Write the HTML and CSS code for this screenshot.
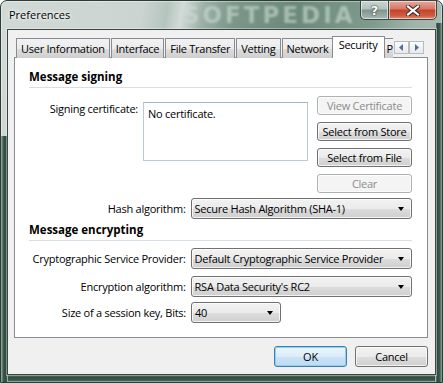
FILE: index.html
```html
<!DOCTYPE html>
<html lang="en">
<head>
  <meta charset="UTF-8" />
  <meta name="viewport" content="width=device-width, initial-scale=1.0" />
  <title>Preferences</title>
  <link rel="stylesheet" href="styles.css">
</head>
<body>
  <div class="window">
    <div class="titlebar">
      <span class="title">Preferences</span>
      <span class="watermark">SOFTPEDIA</span>
      <div class="caption-buttons">
        <div class="cap help">?</div>
        <div class="cap close">
          <svg width="14" height="11" viewBox="0 0 14 11">
            <path d="M2 1.5 L12 9.5 M12 1.5 L2 9.5" stroke="#3a2a26" stroke-width="4.2" stroke-linecap="square" />
            <path d="M2 1.5 L12 9.5 M12 1.5 L2 9.5" stroke="#fff" stroke-width="2.2" stroke-linecap="square" />
          </svg>
        </div>
      </div>
    </div>

    <div class="client">
      <div class="tabs">
        <div class="tab">User Information</div>
        <div class="tab">Interface</div>
        <div class="tab">File Transfer</div>
        <div class="tab">Vetting</div>
        <div class="tab">Network</div>
        <div class="tab active">Security</div>
        <div class="tab partial">P</div>
        <div class="tab-scroll">
          <span class="scroll-btn">
            <svg width="5" height="7" viewBox="0 0 5 7"><path d="M4 0 L0 3.5 L4 7 Z" fill="#4f6f9a" /></svg>
          </span>
          <span class="scroll-btn">
            <svg width="5" height="7" viewBox="0 0 5 7"><path d="M1 0 L5 3.5 L1 7 Z" fill="#4f6f9a" /></svg>
          </span>
        </div>
      </div>

      <div class="panel">
        <div class="group-title">Message signing</div>

        <div class="sign-row">
          <label class="sign-label">Signing certificate:</label>
          <div class="textbox">No certificate.</div>
          <div class="btn-col">
            <button class="btn" disabled>View Certificate</button>
            <button class="btn">Select from Store</button>
            <button class="btn">Select from File</button>
            <button class="btn" disabled>Clear</button>
          </div>
        </div>

        <div class="field hash">
          <label>Hash algorithm:</label>
          <div class="combo">Secure Hash Algorithm (SHA-1)</div>
        </div>

        <div class="group-title second">Message encrypting</div>

        <div class="field csp">
          <label>Cryptographic Service Provider:</label>
          <div class="combo">Default Cryptographic Service Provider</div>
        </div>
        <div class="field algo">
          <label>Encryption algorithm:</label>
          <div class="combo">RSA Data Security's RC2</div>
        </div>
        <div class="field keysize">
          <label>Size of a session key, Bits:</label>
          <div class="combo small">40</div>
        </div>
      </div>

      <div class="footer">
        <button class="btn dialog default">OK</button>
        <button class="btn dialog">Cancel</button>
      </div>
    </div>
  </div>
</body>
</html>
```
FILE: styles.css
```css
* {
  box-sizing: border-box;
  margin: 0;
  padding: 0;
}

body {
  width: 443px;
  height: 383px;
  overflow: hidden;
  background: #fff;
  font-family: 'Open Sans', sans-serif;
  font-size: 11px;
  letter-spacing: -0.25px;
  color: #000;
}

/* glass frame */
.window {
  position: relative;
  width: 443px;
  height: 383px;
  border: 1px solid #2c3b37;
  border-radius: 7px 7px 0 0;
  padding: 28px 6px 7px 6px;
  display: flex;
  flex-direction: column;
  background:
    linear-gradient(180deg, #5d7c6d 0%, #2f4b3e 50%, #4d6b5c 100%) left bottom / 100% 8px no-repeat,
    linear-gradient(90deg, rgba(0, 0, 0, 0) 20%, rgba(190, 215, 205, 0.5) 28%, rgba(0, 0, 0, 0) 36%) left bottom / 100% 8px no-repeat,
    linear-gradient(100deg, #d0d9d6 0%, #cbd4d1 28%, #b5c5be 33%, #d2dbd8 36%, #9db2a8 40%, #7c978a 46%, #6b897a 58%, #7f9b8e 74%, #a0b4ac 82%, #acbdb7 92%, #98ada5 100%);
  box-shadow: inset 0 0 0 1px rgba(255, 255, 255, 0.4);
}

.window::before,
.window::after {
  content: "";
  position: absolute;
  bottom: 0;
  width: 7px;
}

.window::before {
  left: 0;
  top: 135px;
  background: linear-gradient(90deg, #9fb2a9, #3a5a4b 35%, #2b4639 75%, #c7d1ce);
}

.window::after {
  right: 0;
  top: 22px;
  background: linear-gradient(90deg, #cdd6d3, #2d473b 30%, #3a5a4b 65%, #8ea39a);
}

.titlebar {
  position: absolute;
  top: 0;
  left: 0;
  right: 0;
  height: 28px;
}

.title {
  position: absolute;
  left: 8px;
  top: 6px;
  font-size: 11px;
  letter-spacing: 0;
  color: #000;
  text-shadow: 0 0 6px #fff, 0 0 3px #fff;
}

.watermark {
  position: absolute;
  left: 182px;
  top: 1px;
  font-family: 'DejaVu Sans', sans-serif;
  font-weight: 700;
  font-size: 23px;
  line-height: 26px;
  letter-spacing: 3px;
  color: rgba(205, 220, 213, 0.6);
  filter: blur(1.1px);
}

.caption-buttons {
  position: absolute;
  top: -1px;
  right: 5px;
  display: flex;
}

.cap {
  height: 20px;
  border: 1px solid #3a4744;
  display: flex;
  align-items: center;
  justify-content: center;
  box-shadow: inset 0 0 0 1px rgba(255, 255, 255, 0.55);
}

.help {
  width: 28px;
  border-radius: 0 0 0 5px;
  border-right: none;
  background: linear-gradient(180deg, #c9d4d1 0%, #b3c1bd 45%, #7f948e 50%, #a8b8b3 100%);
  font-family: 'DejaVu Sans', sans-serif;
  font-weight: 700;
  font-size: 13px;
  color: #fff;
  text-shadow: 0 0 1px #333, 0 0 2px #333;
}

.close {
  width: 49px;
  border-radius: 0 0 5px 0;
  background: linear-gradient(180deg, #e7a89b 0%, #d87564 45%, #c2432c 50%, #cf5a3e 80%, #dc8a6c 100%);
}

/* client area */
.client {
  position: relative;
  z-index: 1;
  flex: 1;
  background: #f0f0f0;
  border: 1px solid #3a4542;
  box-shadow: 0 0 0 1px rgba(255, 255, 255, 0.35);
  padding: 6px 7px 7px 6px;
  display: flex;
  flex-direction: column;
}

.tabs {
  height: 21px;
  display: flex;
  align-items: flex-end;
  padding-left: 2px;
  position: relative;
  z-index: 1;
}

.tab {
  height: 20px;
  margin-bottom: -1px;
  padding: 2px 4px 0 4px;
  margin-right: 1px;
  border: 1px solid #898c95;
  border-bottom: none;
  background: linear-gradient(180deg, #f2f2f2 0%, #ebebeb 50%, #dddddd 51%, #cfcfcf 100%);
  white-space: nowrap;
  line-height: 16px;
}

.tab.active {
  height: 22px;
  margin: 0 -1px -1px -3px;
  padding: 0 6px;
  background: #fff;
}

.tab.partial {
  margin-left: 0;
  margin-right: 0;
  padding: 2px 0 0 2px;
  width: 9px;
  border-right: none;
}

.tab-scroll {
  display: flex;
  align-self: flex-start;
  margin-top: 5px;
  margin-left: 1px;
}

.scroll-btn {
  width: 15px;
  height: 13px;
  border: 1px solid #b7bcc4;
  background: linear-gradient(180deg, #fbfbfb, #e9eaec);
  display: flex;
  align-items: center;
  justify-content: center;
}

.panel {
  height: 281px;
  background: #fff;
  border: 1px solid #898c95;
  padding: 11px 15px 0 14px;
  display: flex;
  flex-direction: column;
}

.group-title {
  font-weight: 700;
  font-size: 11.5px;
  letter-spacing: 0;
  line-height: 15px;
  padding-bottom: 3px;
  border-bottom: 1px solid #d5dfe5;
}

.group-title.second {
  margin-top: 3px;
}

.sign-row {
  display: flex;
  margin-top: 8px;
}

.sign-label {
  width: 109px;
  text-align: right;
  padding-top: 5px;
  line-height: 15px;
}

.textbox {
  width: 165px;
  height: 59px;
  margin: 6px 0 0 5px;
  border: 1px solid #b8cbdc;
  border-top-color: #a3b6c8;
  padding: 3px 4px;
  line-height: 15px;
}

.btn-col {
  display: flex;
  flex-direction: column;
  gap: 7px;
  margin-left: auto;
}

.btn {
  width: 95px;
  height: 19px;
  font-family: inherit;
  font-size: 11px;
  letter-spacing: -0.25px;
  color: #000;
  border: 1px solid #707070;
  border-radius: 3px;
  background: linear-gradient(180deg, #f2f2f2 0%, #ebebeb 50%, #dddddd 51%, #cfcfcf 100%);
  box-shadow: inset 0 0 0 1px rgba(255, 255, 255, 0.75);
  line-height: 15px;
}

.btn:disabled {
  color: #8b8b8b;
  border-color: #adb2b5;
  background: #f4f4f4;
}

.field {
  display: flex;
  align-items: center;
}

.field label {
  width: 157px;
  text-align: right;
  margin-right: 5px;
  line-height: 15px;
}

.field.hash {
  margin-top: 5px;
}

.field.csp {
  margin-top: 7px;
}

.field.algo {
  margin-top: 7px;
}

.field.keysize {
  margin-top: 5px;
}

.combo {
  position: relative;
  width: 222px;
  height: 21px;
  border: 1px solid #707070;
  border-radius: 3px;
  background: linear-gradient(180deg, #f2f2f2 0%, #ebebeb 50%, #dddddd 51%, #cfcfcf 100%);
  box-shadow: inset 0 0 0 1px rgba(255, 255, 255, 0.75);
  padding: 0 18px 0 3px;
  line-height: 19px;
  white-space: nowrap;
}

.combo::after {
  content: "";
  position: absolute;
  right: 7px;
  top: 8px;
  border-left: 3.5px solid transparent;
  border-right: 3.5px solid transparent;
  border-top: 4px solid #000;
}

.combo.small {
  width: 90px;
}

.footer {
  display: flex;
  justify-content: flex-end;
  gap: 8px;
  margin-top: 8px;
}

.btn.dialog {
  width: 73px;
  height: 21px;
}

.btn.default {
  border-color: #3c7fb1;
  background: linear-gradient(180deg, #eaf5fc 0%, #dcedf9 50%, #cbe3f5 51%, #bedbf1 100%);
  box-shadow: inset 0 0 0 1px #8fd0f2;
}
```
